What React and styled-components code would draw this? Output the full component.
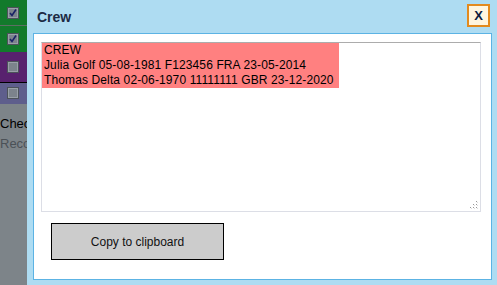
import React from "react";
import styled, { createGlobalStyle } from "styled-components";

const Global = createGlobalStyle`
  html, body { margin: 0; padding: 0; }
  body { font-family: "Liberation Sans", Arial, sans-serif; width: 497px; height: 285px; overflow: hidden; }
`;

const Page = styled.div`
  display: flex;
  width: 497px;
  height: 285px;
  background: #7d8489;
`;

const Strip = styled.div`
  width: 27px;
  flex: none;
  display: flex;
  flex-direction: column;
  overflow: hidden;
  background: #7d8489;
`;

const Row = styled.div`
  height: ${(p) => p.$h}px;
  background: ${(p) => p.$bg};
  border-bottom: 1px solid ${(p) => p.$line || "transparent"};
  display: flex;
  align-items: center;
  padding-left: 7px;
  flex: none;
  box-sizing: border-box;
`;

const Box = styled.span`
  width: 12px;
  height: 12px;
  box-sizing: border-box;
  border: 1px solid #4c525a;
  background: #7c838c;
  box-shadow: inset 0 0 0 1px #99a0a8;
  display: flex;
  align-items: center;
  justify-content: center;
`;

const StripText = styled.div`
  font-size: 13px;
  white-space: nowrap;
  color: ${(p) => p.$c};
  line-height: 20px;
`;

const StripTexts = styled.div`
  padding-top: 10px;
`;

const Dialog = styled.div`
  flex: 1;
  background: #aedcf2;
  display: flex;
  flex-direction: column;
  padding: 0 5px 5px 6px;
`;

const Header = styled.div`
  height: 33px;
  display: flex;
  align-items: center;
  justify-content: space-between;
  padding-left: 4px;
  padding-right: 2px;
`;

const Title = styled.div`
  font-size: 14px;
  font-weight: bold;
  color: #1c2b45;
  padding-top: 1px;
`;

const CloseBtn = styled.button`
  width: 23px;
  height: 23px;
  margin-top: 4px;
  align-self: flex-start;
  box-sizing: border-box;
  border: 2px solid #e38a1d;
  background: #fff5de;
  color: #0d1b3d;
  font-family: "Liberation Sans", Arial, sans-serif;
  font-weight: bold;
  font-size: 13px;
  padding: 0;
  display: flex;
  align-items: center;
  justify-content: center;
`;

const Panel = styled.div`
  flex: 1;
  background: #fff;
  border: 1px solid #5cb3e4;
  padding: 8px 10px 0 7px;
  display: flex;
  flex-direction: column;
`;

const TextBox = styled.div`
  position: relative;
  height: 170px;
  box-sizing: border-box;
  border: 1px solid #dcdee6;
  border-top-color: #acacac;
  padding: 0;
  overflow: hidden;
`;

const Selected = styled.div`
  display: inline-block;
  background: #ff8080;
  color: #000;
  font-size: 12px;
  letter-spacing: 0.12px;
  line-height: 15px;
  padding: 0 5px 0 2px;
  white-space: pre;
`;

const Grip = styled.svg`
  position: absolute;
  right: 2px;
  bottom: 2px;
`;

const Button = styled.button`
  margin-top: 11px;
  margin-left: 10px;
  width: 173px;
  height: 37px;
  box-sizing: border-box;
  border: 1px solid #000;
  background: #cccccc;
  font-family: "Liberation Sans", Arial, sans-serif;
  font-size: 12px;
  color: #111;
  padding: 0;
`;

const Check = () => (
  <svg width="10" height="10" viewBox="0 0 10 10">
    <path d="M2 5 L4 7.5 L8 1.5" fill="none" stroke="#1a2266" strokeWidth="1.6" />
  </svg>
);

export default function App() {
  return (
    <>
      <Global />
      <Page>
        <Strip>
          <Row $h={26} $bg="#127a2b" $line="#5d6e63"><Box><Check /></Box></Row>
          <Row $h={26} $bg="#127a2b"><Box><Check /></Box></Row>
          <Row $h={31} $bg="#58216e" $line="#000"><Box /></Row>
          <Row $h={21} $bg="#5e5e8c"><Box /></Row>
          <StripTexts>
            <StripText $c="#000">Check</StripText>
            <StripText $c="#4b5157">Record</StripText>
          </StripTexts>
        </Strip>
        <Dialog>
          <Header>
            <Title>Crew</Title>
            <CloseBtn>X</CloseBtn>
          </Header>
          <Panel>
            <TextBox>
              <Selected>{"CREW\nJulia Golf 05-08-1981 F123456 FRA 23-05-2014\nThomas Delta 02-06-1970 11111111 GBR 23-12-2020"}</Selected>
              <Grip width="9" height="9" viewBox="0 0 9 9">
                <rect x="7" y="1" width="1" height="1" fill="#999" />
                <rect x="4" y="4" width="1" height="1" fill="#999" />
                <rect x="7" y="4" width="1" height="1" fill="#999" />
                <rect x="1" y="7" width="1" height="1" fill="#999" />
                <rect x="4" y="7" width="1" height="1" fill="#999" />
                <rect x="7" y="7" width="1" height="1" fill="#999" />
                <rect x="8" y="2" width="1" height="1" fill="#ddd" />
                <rect x="5" y="5" width="1" height="1" fill="#ddd" />
                <rect x="8" y="5" width="1" height="1" fill="#ddd" />
                <rect x="2" y="8" width="1" height="1" fill="#ddd" />
                <rect x="5" y="8" width="1" height="1" fill="#ddd" />
                <rect x="8" y="8" width="1" height="1" fill="#ddd" />
              </Grip>
            </TextBox>
            <Button>Copy to clipboard</Button>
          </Panel>
        </Dialog>
      </Page>
    </>
  );
}
